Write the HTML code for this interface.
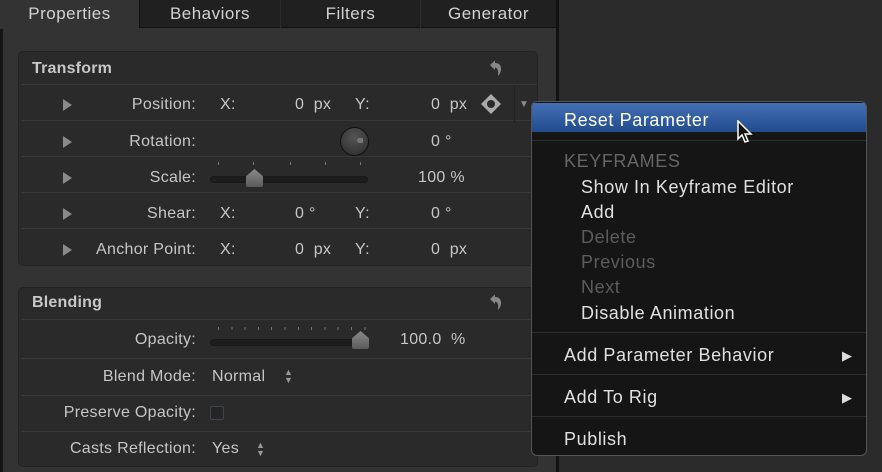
<!DOCTYPE html>
<html><head><style>
*{margin:0;padding:0;box-sizing:border-box}
body{width:882px;height:472px;background:#2b2b2b;font-family:"Liberation Sans",sans-serif;position:relative;overflow:hidden;color:#c9c9c9}
.a{position:absolute;white-space:nowrap}
.panel{left:3px;top:0;width:553px;height:472px;background:#333}
.tabs{left:0;top:0;width:556px;height:28px;background:#202020;border-bottom:1px solid #111}
.tab{position:absolute;top:0;height:28px;font-size:17px;letter-spacing:0.5px;line-height:28px;text-align:center;color:#d2d2d2}
.box{position:absolute;left:18px;width:520px;background:#2a2a2a;border:1px solid #222;border-radius:5px}
.hd{font-size:16px;font-weight:bold;color:#c8c8c8;letter-spacing:0.2px}
.row{position:absolute;left:2px;right:0;height:1px;background:#383838}
.lbl{font-size:16px;letter-spacing:0.3px;color:#c6c6c6}
.tri{width:0;height:0;border-left:9px solid #8a8a8a;border-top:6px solid transparent;border-bottom:6px solid transparent}
.mi{font-size:18px;letter-spacing:0.6px;color:#e0e0e0}
.dis{color:#5c5c5c}
.sep{position:absolute;left:0;right:0;height:1px;background:#2c2c2c}
.track{height:7px;background:#1d1d1d;border-radius:4px;border:1px solid #181818}
.tick{width:1px;height:3px;background:#777}
</style></head><body>
<div class="a panel"></div>
<div class="a" style="left:0;top:0;width:3px;height:472px;background:#151515"></div>
<div class="a" style="left:556px;top:0;width:3px;height:472px;background:#121212"></div>
<div class="a tabs">
<div class="tab" style="left:0;width:139px;background:#333;height:29px">Properties</div>
<div class="tab" style="left:139px;width:141px;border-left:1px solid #111">Behaviors</div>
<div class="tab" style="left:280px;width:140px;border-left:1px solid #2c2c2c">Filters</div>
<div class="tab" style="left:420px;width:136px;border-left:1px solid #2c2c2c">Generator</div>
</div>

<div class="box" style="top:51px;height:215px">
<div class="a hd" style="left:13px;top:8px">Transform</div>
<svg class="a" style="left:470px;top:8px" width="14" height="18" viewBox="0 0 14 18"><path d="M1 5 L6 0.5 L6 3 Q12 3 12 9 Q12 13 9 16 Q10 8 6 7.5 L6 10 Z" fill="#888"/></svg>
<div class="row" style="top:32px"></div>
<div class="row" style="top:68px"></div>
<div class="row" style="top:104px"></div>
<div class="row" style="top:140px"></div>
<div class="row" style="top:176px"></div>
</div>
<div class="a" style="left:514px;top:86px;width:1px;height:36px;background:#222"></div>

<div class="a tri" style="left:63px;top:99px"></div>
<div class="a tri" style="left:63px;top:136px"></div>
<div class="a tri" style="left:63px;top:172px"></div>
<div class="a tri" style="left:63px;top:208px"></div>
<div class="a tri" style="left:63px;top:244px"></div>

<div class="a lbl" style="right:686px;top:96px">Position:</div>
<div class="a lbl" style="right:686px;top:133px">Rotation:</div>
<div class="a lbl" style="right:686px;top:169px">Scale:</div>
<div class="a lbl" style="right:686px;top:205px">Shear:</div>
<div class="a lbl" style="right:686px;top:241px">Anchor Point:</div>

<div class="a lbl" style="left:220px;top:96px">X:</div>
<div class="a lbl" style="left:295px;top:96px">0&nbsp; px</div>
<div class="a lbl" style="left:355px;top:96px">Y:</div>
<div class="a lbl" style="left:431px;top:96px">0&nbsp; px</div>
<svg class="a" style="left:480px;top:93px" width="22" height="22" viewBox="0 0 22 22"><path d="M11 1 L21 11 L11 21 L1 11 Z" fill="#aaa"/><circle cx="11" cy="11" r="4" fill="#2a2a2a"/></svg>
<div class="a" style="left:519px;top:99px;font-size:10px;color:#888">▼</div>

<div class="a" style="left:340px;top:127px;width:29px;height:29px;border-radius:50%;background:radial-gradient(circle at 50% 35%,#555,#2a2a2a);border:1px solid #111"></div>
<div class="a" style="left:357px;top:138px;width:6px;height:5px;background:#777;border-radius:3px 0 0 3px"></div>
<div class="a lbl" style="left:431px;top:133px">0 °</div>

<div class="a tick" style="left:218px;top:162px"></div><div class="a tick" style="left:253px;top:162px"></div><div class="a tick" style="left:290px;top:162px"></div><div class="a tick" style="left:325px;top:162px"></div><div class="a tick" style="left:360px;top:162px"></div>
<div class="a track" style="left:210px;top:176px;width:158px"></div>
<div class="a" style="left:246px;top:169px;width:17px;height:18px;background:linear-gradient(#8a8a8a,#5a5a5a);clip-path:polygon(50% 0,100% 40%,100% 100%,0 100%,0 40%);border-radius:2px"></div>
<div class="a lbl" style="left:418px;top:169px">100 %</div>

<div class="a lbl" style="left:220px;top:205px">X:</div>
<div class="a lbl" style="left:295px;top:205px">0 °</div>
<div class="a lbl" style="left:355px;top:205px">Y:</div>
<div class="a lbl" style="left:431px;top:205px">0 °</div>

<div class="a lbl" style="left:220px;top:241px">X:</div>
<div class="a lbl" style="left:295px;top:241px">0&nbsp; px</div>
<div class="a lbl" style="left:355px;top:241px">Y:</div>
<div class="a lbl" style="left:431px;top:241px">0&nbsp; px</div>

<div class="box" style="top:287px;height:180px">
<div class="a hd" style="left:13px;top:6px">Blending</div>
<svg class="a" style="left:470px;top:6px" width="14" height="18" viewBox="0 0 14 18"><path d="M1 5 L6 0.5 L6 3 Q12 3 12 9 Q12 13 9 16 Q10 8 6 7.5 L6 10 Z" fill="#888"/></svg>
<div class="row" style="top:31px"></div>
<div class="row" style="top:70px"></div>
<div class="row" style="top:107px"></div>
<div class="row" style="top:143px"></div>
</div>
<div class="a lbl" style="right:686px;top:331px">Opacity:</div>
<div class="a lbl" style="right:686px;top:368px">Blend Mode:</div>
<div class="a lbl" style="right:686px;top:404px">Preserve Opacity:</div>
<div class="a lbl" style="right:686px;top:440px">Casts Reflection:</div>

<div class="a" style="left:218px;top:327px;width:150px;height:3px;background:repeating-linear-gradient(90deg,#777 0 1px,transparent 1px 13.3px)"></div>
<div class="a track" style="left:210px;top:339px;width:158px"></div>
<div class="a" style="left:352px;top:331px;width:17px;height:18px;background:linear-gradient(#8a8a8a,#5a5a5a);clip-path:polygon(50% 0,100% 40%,100% 100%,0 100%,0 40%);border-radius:2px"></div>
<div class="a lbl" style="left:400px;top:331px">100.0&nbsp; %</div>
<div class="a lbl" style="left:212px;top:368px">Normal</div>
<div class="a" style="left:284px;top:368px;font-size:9px;line-height:8px;color:#999">▲<br>▼</div>
<div class="a" style="left:210px;top:406px;width:14px;height:14px;border:1px solid #3e4450;border-radius:2px;background:#252525"></div>
<div class="a lbl" style="left:212px;top:440px">Yes</div>
<div class="a" style="left:256px;top:441px;font-size:9px;line-height:8px;color:#999">▲<br>▼</div>

<div class="a" style="left:531px;top:101px;width:336px;height:355px;background:#151515;border:1px solid #555;border-radius:6px;overflow:hidden">
<div class="a" style="left:0;top:1px;width:100%;height:29px;background:linear-gradient(#4470b5,#214b8d)"></div>
<div class="a mi" style="left:32px;top:8px;color:#fff">Reset Parameter</div>
<div class="sep" style="top:38px"></div>
<div class="a mi dis" style="left:32px;top:49px;color:#666">KEYFRAMES</div>
<div class="a mi" style="left:49px;top:75px">Show In Keyframe Editor</div>
<div class="a mi" style="left:49px;top:100px">Add</div>
<div class="a mi dis" style="left:49px;top:125px">Delete</div>
<div class="a mi dis" style="left:49px;top:150px">Previous</div>
<div class="a mi dis" style="left:49px;top:175px">Next</div>
<div class="a mi" style="left:49px;top:201px">Disable Animation</div>
<div class="sep" style="top:230px"></div>
<div class="a mi" style="left:32px;top:243px">Add Parameter Behavior</div>
<div class="a" style="left:310px;top:246px;font-size:13px;color:#ddd">▶</div>
<div class="sep" style="top:272px"></div>
<div class="a mi" style="left:32px;top:285px">Add To Rig</div>
<div class="a" style="left:310px;top:288px;font-size:13px;color:#ddd">▶</div>
<div class="sep" style="top:314px"></div>
<div class="a mi" style="left:32px;top:327px">Publish</div>
</div>
<svg class="a" style="left:736px;top:120px" width="20" height="26" viewBox="0 0 20 26"><path d="M2 1 L2 19 L6 15 L9 22 L12 21 L9 14 L15 14 Z" fill="#111" stroke="#fff" stroke-width="1.5"/></svg>
</body></html>
